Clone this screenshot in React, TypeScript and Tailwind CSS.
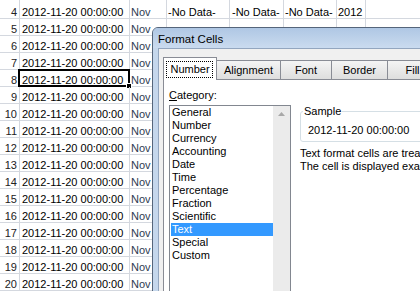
import React from "react";

const grid = "border-[#d4d8df]";

function Cell({ w, children, cls = "" }: { w: string; children?: React.ReactNode; cls?: string }) {
  return (
    <div className={`${w} shrink-0 h-full border-r ${grid} flex items-end overflow-hidden whitespace-nowrap ${cls}`}>
      {children}
    </div>
  );
}

function Row({ n, first }: { n: number; first?: boolean }) {
  const selected = n === 8;
  return (
    <div className={`flex ${first ? "h-[19px]" : "h-[17px]"} border-b ${grid} text-[11px] leading-[11px]`}>
      <Cell w="w-[20px]" cls="justify-end pr-[2px] text-[#222]">{n}</Cell>
      <div className={`w-[110px] shrink-0 h-full border-r ${grid} flex items-end pl-[2px] text-black relative whitespace-nowrap`}>
        2012-11-20 00:00:00
        {selected && (
          <>
            <span className="absolute left-[-2px] right-[-1px] top-[-1px] bottom-[-1px] border-2 border-black" />
            <span className="absolute right-[-3px] bottom-[-3px] w-[6px] h-[6px] bg-black border border-white" />
          </>
        )}
      </div>
      <Cell w="w-[37px]" cls="pl-[1px] text-[#2f3b52]">Nov</Cell>
      <Cell w="w-[63px]" cls="pl-[1px] text-black">{first ? "-No Data-" : ""}</Cell>
      <Cell w="w-[54px]" cls="pl-[2px] text-black">{first ? "-No Data-" : ""}</Cell>
      <Cell w="w-[53px]" cls="pl-[1px] text-black">{first ? "-No Data-" : ""}</Cell>
      <Cell w="w-[29px]" cls="pl-[1px] text-black">{first ? "2012" : ""}</Cell>
      <Cell w="w-[80px]" />
    </div>
  );
}

const cats = [
  "General",
  "Number",
  "Currency",
  "Accounting",
  "Date",
  "Time",
  "Percentage",
  "Fraction",
  "Scientific",
  "Text",
  "Special",
  "Custom",
];

function Tab({ w, children }: { w: string; children: React.ReactNode }) {
  return (
    <div
      className={`${w} shrink-0 h-[19px] border-t border-r border-[#898c95] bg-linear-to-b from-[#f4f4f4] to-[#dedede] flex items-center justify-center whitespace-nowrap overflow-hidden`}
    >
      {children}
    </div>
  );
}

function Dialog() {
  return (
    <div
      className="absolute left-[152px] top-[27px] w-[300px] h-[300px] rounded-tl-[6px] border border-[#55657a] bg-[#c5d7ec] flex flex-col overflow-hidden z-10 text-black"
      style={{ fontFamily: "'Liberation Sans', Arial, sans-serif" }}
    >
      <div className="h-[20px] shrink-0 bg-linear-to-b from-[#afc7e4] to-[#cadbef] pl-[5px] pt-[4px] text-[11.5px] leading-[15px]">
        Format Cells
      </div>
      <div className="flex-1 ml-[5px] border-l border-t border-[#93a6bf] bg-[#f0f0f0] pl-[4px] pt-[8px] flex flex-col text-[11px]">
        <div className="flex items-end h-[22px] relative z-10 leading-[15px]">
          <div className="relative -mb-px h-[23px] w-[54px] shrink-0 bg-white border-l border-t border-r border-[#898c95] flex items-center justify-center">
            <span className="absolute left-[2px] right-[3px] top-[3px] bottom-[2px] border border-dotted border-black" />
            Number
          </div>
          <Tab w="w-[64px]">Alignment</Tab>
          <Tab w="w-[51px]">Font</Tab>
          <Tab w="w-[56px]">Border</Tab>
          <Tab w="w-[50px]">Fill</Tab>
        </div>
        <div className="flex-1 bg-white border border-[#898c95] pl-[5px] pt-[7px] flex items-start">
          <div className="w-[122px] shrink-0 flex flex-col">
            <div className="h-[16px] leading-[16px]">
              <span className="underline">C</span>ategory:
            </div>
            <div className="mt-[2px] w-[122px] h-[200px] border border-[#828790] flex">
              <div className="flex-1 pl-[1px] flex flex-col">
                {cats.map((c) => (
                  <div
                    key={c}
                    className={`h-[13px] leading-[13px] pl-[1px] whitespace-nowrap ${
                      c === "Text" ? "bg-[#3399ff] text-white" : ""
                    }`}
                  >
                    {c}
                  </div>
                ))}
              </div>
              <div className="w-[17px] shrink-0 bg-[#ebebeb] flex flex-col items-center pt-[6px]">
                <svg width="7" height="4" viewBox="0 0 7 4">
                  <path d="M0 4 L3.5 0 L7 4 Z" fill="#a8a8a8" />
                </svg>
              </div>
            </div>
          </div>
          <div className="ml-[9px] pt-[17px] flex flex-col">
            <fieldset className="w-[200px] border border-[#d5dfe5] rounded-[3px] pl-[7px] pt-[4px] pb-[3px]">
              <legend className="-ml-[5px] px-[1px] leading-[15px]">Sample</legend>
              <div className="leading-[15px] whitespace-nowrap">2012-11-20 00:00:00</div>
            </fieldset>
            <div className="mt-[5px] leading-[13px] whitespace-nowrap">
              <div>Text format cells are treated as text even when a number is in the cell.</div>
              <div>The cell is displayed exactly as entered.</div>
            </div>
          </div>
        </div>
      </div>
    </div>
  );
}

export default function App() {
  const rows = Array.from({ length: 16 }, (_, i) => i + 5);
  return (
    <div
      className="relative w-[420px] h-[291px] overflow-hidden bg-white"
      style={{ fontFamily: "'Liberation Sans', Arial, sans-serif" }}
    >
      <div className="flex flex-col">
        <Row n={4} first />
        {rows.map((n) => (
          <Row key={n} n={n} />
        ))}
      </div>
      <Dialog />
    </div>
  );
}
